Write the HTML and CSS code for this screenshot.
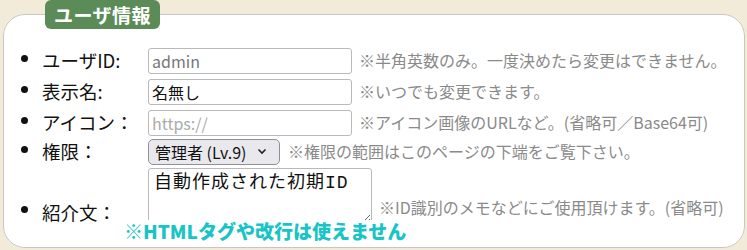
FILE: index.html
```html
<!DOCTYPE html>
<html lang="ja">
<head>
<meta charset="utf-8">
<link rel="stylesheet" href="styles.css">
</head>
<body>
<fieldset class="card">
  <legend class="title">ユーザ情報</legend>
  <ul class="rows">
    <li class="row">
      <span class="label">ユーザID:</span><input class="field field-ro" type="text" value="admin" readonly><span class="note">※半角英数のみ。一度決めたら変更はできません。</span>
    </li>
    <li class="row">
      <span class="label">表示名:</span><input class="field" type="text" value="名無し"><span class="note">※いつでも変更できます。</span>
    </li>
    <li class="row">
      <span class="label">アイコン：</span><input class="field" type="text" placeholder="https://"><span class="note">※アイコン画像のURLなど。(省略可／Base64可)</span>
    </li>
    <li class="row row-sel">
      <span class="label">権限：</span><span class="select">管理者 (Lv.9)<svg class="chev" width="10" height="7" viewBox="0 0 10 7"><path d="M1.5 1.5 L5 5 L8.5 1.5" fill="none" stroke="#222" stroke-width="1.6"/></svg></span><span class="note note-sel">※権限の範囲はこのページの下端をご覧下さい。</span>
    </li>
    <li class="row row-text">
      <span class="label">紹介文：</span><span class="area-wrap"><textarea class="area">自動作成された初期ID</textarea></span><span class="note">※ID識別のメモなどにご使用頂けます。(省略可)</span>
    </li>
  </ul>
  <div class="warn">※HTMLタグや改行は使えません</div>
</fieldset>
</body>
</html>
```
FILE: styles.css
```css
html, body {
  margin: 0;
  padding: 0;
  background: #f3ebd9;
  font-family: "Noto Sans CJK JP", "Noto Sans", sans-serif;
}
.card {
  margin: 0 2px 0 3px;
  padding: 0;
  border: 1px solid #c9c6bf;
  border-radius: 22px;
  background: #fff;
  height: 248px;
  box-sizing: border-box;
}
.title {
  margin-left: 41px;
  padding: 0 9px;
  height: 29px;
  line-height: 29px;
  background: #5b8c57;
  color: #fff;
  font-weight: bold;
  font-size: 19px;
  border-radius: 6px;
  letter-spacing: 0.5px;
}
.rows {
  list-style: disc;
  margin: 14px 0 0 0;
  padding: 0 0 0 38px;
}
.row {
  font-size: 18.5px;
  color: #111;
  height: 31px;
  line-height: 31px;
}
.row > * { vertical-align: middle; }
.label {
  display: inline-block;
  width: 106px;
}
.field {
  box-sizing: border-box;
  width: 204px;
  height: 26px;
  border: 1px solid #b9b9b9;
  border-radius: 3px;
  padding: 0 3px;
  font-family: "Noto Sans CJK JP", sans-serif;
  font-size: 16px;
  color: #111;
  margin: 0;
}
.field-ro { color: #777; }
.field::placeholder { color: #aaa; }
.note {
  font-size: 16px;
  color: #8a8a8a;
  margin-left: 7px;
}
.row-sel { height: 29px; line-height: 27px; }
.select {
  display: inline-flex;
  align-items: center;
  gap: 10px;
  box-sizing: border-box;
  width: 132px;
  height: 26px;
  padding: 0 8px 0 6px;
  background: #e9e9ed;
  border: 1px solid #8f8f9d;
  border-radius: 5px;
  font-size: 16px;
  line-height: 24px;
  color: #111;
}
.note-sel { margin-left: 8px; }
.row-text {
  height: auto;
  line-height: 24px;
  margin-top: 3px;
}
.area-wrap {
  display: inline-block;
  vertical-align: bottom !important;
}
.area {
  display: block;
  box-sizing: border-box;
  width: 224px;
  height: 56px;
  border: 1px solid #b9b9b9;
  border-radius: 3px;
  padding: 3px 5px;
  font-family: "Liberation Mono", "Noto Sans CJK JP", monospace;
  font-size: 18px;
  line-height: 22px;
  letter-spacing: 1px;
  color: #111;
  resize: both;
  margin: 0;
}
.row-text .note { vertical-align: 3px; }
.warn {
  position: relative;
  margin: -4px 0 0 120px;
  width: 292px;
  background: #fff;
  font-weight: 900;
  color: #17c4c6;
  font-size: 19px;
  line-height: 22px;
}
```
